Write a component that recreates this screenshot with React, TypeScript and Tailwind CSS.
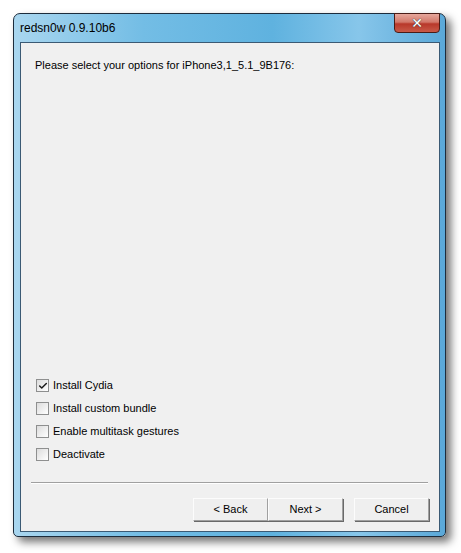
import { Check } from "lucide-react";

const options = [
  { label: "Install Cydia", checked: true },
  { label: "Install custom bundle", checked: false },
  { label: "Enable multitask gestures", checked: false },
  { label: "Deactivate", checked: false },
];

const font = { fontFamily: '"Liberation Sans", Arial, sans-serif' };

const CheckBox = ({ checked }: { checked: boolean }) => (
  <div className="w-[13px] h-[13px] border border-[#8e8f8f] bg-[linear-gradient(135deg,#dcdcdc,#ffffff)] flex items-center justify-center">
    {checked && <Check size={10} strokeWidth={3.5} className="text-[#1a1a1a]" />}
  </div>
);

const Button = ({ label, className = "" }: { label: string; className?: string }) => (
  <button
    className={`h-[23px] text-[11px] text-black bg-[#efefef] border border-t-[#fcfcfc] border-l-[#fcfcfc] border-r-[#a0a0a0] border-b-[#a0a0a0] shadow-[1px_1px_0_#696969] ${className}`}
  >
    {label}
  </button>
);

export default function App() {
  return (
    <div className="w-[461px] h-[553px] bg-white pt-[13px] pl-[13px]" style={font}>
      <div className="w-[433px] h-[524px] flex flex-col rounded-t-[7px] rounded-b-[5px] border border-[#1c2c3c] bg-[linear-gradient(90deg,#a9d6ef_0%,#73bde5_30%,#5fb2df_60%,#87c6ea_80%,#5aa8d8_100%)] shadow-[5px_5px_8px_rgba(0,0,0,0.55)] pl-[6px] pr-[5px] pb-[4px]">
        <div className="h-[28px] flex items-start justify-between">
          <span className="pt-[8px] text-[12px] text-black leading-none">redsn0w 0.9.10b6</span>
          <div className="-mt-px w-[46px] h-[20px] rounded-b-[4px] border border-[#4a1c17] bg-[linear-gradient(180deg,#e6a79c_0%,#d2786a_45%,#b8382a_55%,#c85a48_100%)] flex items-center justify-center">
            <span
              className="text-[14px] font-bold text-white leading-none"
              style={{ fontFamily: '"DejaVu Sans", sans-serif', textShadow: "0 0 1px #3a3f4a, 0 0 1px #3a3f4a" }}
            >
              ✕
            </span>
          </div>
        </div>
        <div className="flex-1 flex flex-col border border-[#3b5a74] bg-[#f0f0f0] pb-[10px]">
          <p className="pt-[15px] pl-[14px] text-[11px] leading-[14px] text-black">
            Please select your options for iPhone3,1_5.1_9B176:
          </p>
          <div className="flex-1" />
          <div className="flex flex-col pl-[15px]">
            {options.map((o) => (
              <div key={o.label} className="h-[23px] flex items-center gap-[4px]">
                <CheckBox checked={o.checked} />
                <span className="text-[11px] text-black">{o.label}</span>
              </div>
            ))}
          </div>
          <div className="mt-[16px] ml-[10px] mr-[11px] h-px bg-[#a0a0a0] border-b border-white box-content" />
          <div className="mt-[14px] flex justify-end pr-[10px]">
            <Button label="< Back" className="w-[75px]" />
            <Button label="Next >" className="w-[75px]" />
            <Button label="Cancel" className="w-[75px] ml-[11px]" />
          </div>
        </div>
      </div>
    </div>
  );
}
